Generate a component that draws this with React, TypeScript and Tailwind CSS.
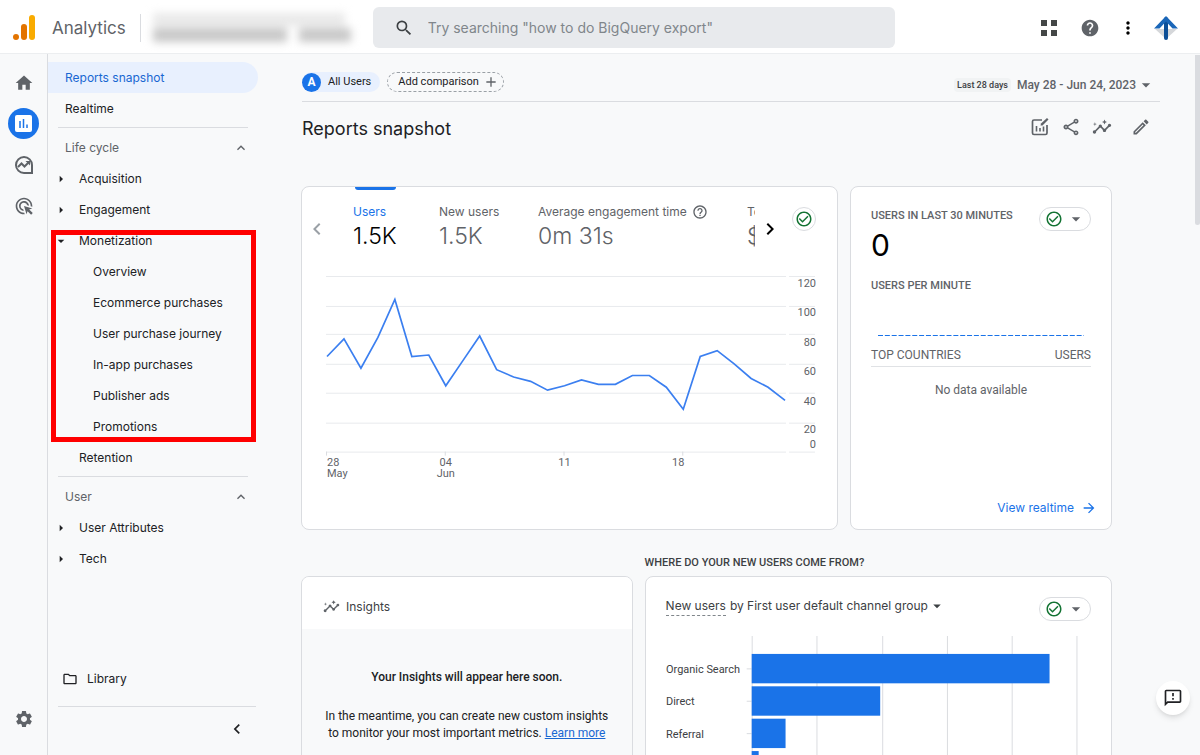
import type { ReactNode } from "react";
import {
  MdAdsClick,
  MdArrowDropDown,
  MdArrowForward,
  MdArrowRight,
  MdCheckCircleOutline,
  MdChevronLeft,
  MdChevronRight,
  MdHelp,
  MdHelpOutline,
  MdHome,
  MdInsights,
  MdMoreVert,
  MdOutlineEdit,
  MdOutlineFeedback,
  MdOutlineFolder,
  MdSearch,
  MdSettings,
  MdOutlineShare,
  MdKeyboardArrowUp,
  MdAdd,
} from "react-icons/md";

const monetization = [
  "Overview",
  "Ecommerce purchases",
  "User purchase journey",
  "In-app purchases",
  "Publisher ads",
  "Promotions",
];

const users = [
  65, 77, 57, 78, 104, 65, 66, 45, 62, 79, 56, 51, 48, 42, 45, 49, 46, 46, 52, 52, 44, 29, 65, 69, 60, 50, 44, 35,
];

const yLabels = [
  { text: "120", y: 17 },
  { text: "100", y: 46 },
  { text: "80", y: 76 },
  { text: "60", y: 105 },
  { text: "40", y: 135 },
  { text: "20", y: 163 },
  { text: "0", y: 178 },
];

const channels = [
  { name: "Organic Search", width: 299 },
  { name: "Direct", width: 129 },
  { name: "Referral", width: 34 },
  { name: "", width: 7 },
];

function AnalyticsLogo() {
  return (
    <svg width="24" height="28" viewBox="0 0 24 28" aria-hidden="true">
      <rect x="16" y="1" width="6" height="25" rx="3" fill="#f9ab00" />
      <rect x="8" y="10" width="6" height="16" rx="3" fill="#e37400" />
      <circle cx="3" cy="23" r="3" fill="#e37400" />
    </svg>
  );
}

function AccountLogo() {
  return (
    <svg width="26" height="26" viewBox="0 0 26 26" aria-hidden="true">
      <path d="M2 14h22L13 24z" fill="#d5d7da" />
      <path d="M13 4v19" stroke="#0d4f97" strokeWidth="4" strokeLinecap="round" />
      <path d="M13 1 1 13.500h5.500L13 6.500l6.500 7H25z" fill="#1a66b8" />
    </svg>
  );
}

function ReportsIcon() {
  return (
    <svg width="17" height="17" viewBox="0 0 17 17" aria-hidden="true">
      <rect width="17" height="17" rx="2" fill="#fff" />
      <path d="M5 6v7M8.500 4v9M12 9.500v3.500" stroke="#1a73e8" strokeWidth="1.500" />
    </svg>
  );
}

function ExploreIcon() {
  return (
    <svg width="20" height="20" viewBox="0 0 20 20" fill="none" stroke="#5f6368" aria-hidden="true">
      <path d="M10 18a8 8 0 1 1 8-8v8z" strokeWidth="2" />
      <path d="m4 12 3.500-3.500 3 3L15 7" strokeWidth="2" />
      <path d="M11.500 6H16v4.500z" fill="#5f6368" stroke="none" />
    </svg>
  );
}

function CustomizeIcon() {
  return (
    <svg width="20" height="20" viewBox="0 0 20 20" fill="none" stroke="#5f6368" strokeWidth="1.700" aria-hidden="true">
      <path d="M12 3H4Q2.500 3 2.500 4.500v11.500Q2.500 17.500 4 17.500h11.500q1.500 0 1.500-1.500V8" />
      <path d="M6.500 9v5.500M10 11v3.500M13.500 9.500v5" strokeWidth="1.600" />
      <path d="m10.500 8.500.5-2L17 1l1.500 1.500-6 6z" fill="#5f6368" stroke="none" />
    </svg>
  );
}

function NavItem({ children, arrow }: { children: ReactNode; arrow?: "right" | "down" }) {
  return (
    <a href="#" className="flex h-[31px] items-center pl-[5px]">
      <span className="flex w-[26px]">
        {arrow === "right" && <MdArrowRight size={16} />}
        {arrow === "down" && <MdArrowDropDown size={16} />}
      </span>
      {children}
    </a>
  );
}

function NavGroup({ children }: { children: ReactNode }) {
  return (
    <button className="mt-[5px] flex h-[30px] w-full items-center justify-between pr-[19px] pl-[17px] text-[#5f6368]">
      {children}
      <MdKeyboardArrowUp size={16} />
    </button>
  );
}

function QualityMenu() {
  return (
    <button
      aria-label="Data quality"
      className="flex h-6 w-[52px] shrink-0 items-center justify-between rounded-full border border-[#dadce0] bg-white pr-1 pl-[5px]"
    >
      <MdCheckCircleOutline size={18} className="text-[#137333]" />
      <MdArrowDropDown size={20} className="text-[#5f6368]" />
    </button>
  );
}

function Header() {
  return (
    <header className="flex h-[54px] shrink-0 items-center border-b border-[#eceef0] bg-white pt-[2px] pr-[21px] pl-[13px]">
      <AnalyticsLogo />
      <span className="ml-[15px] pt-[2px] font-['Inter',sans-serif] text-[17px] text-[#5f6368]">Analytics</span>
      <span className="mr-[12px] ml-[14px] h-7 w-px bg-[#dadce0]" />
      {/* Redacted account name */}
      <div className="flex h-[34px] w-[204px] flex-col justify-center gap-[2px] overflow-hidden blur-[4px]">
        <span className="h-[13px] w-[192px] bg-[#e9e9e9]" />
        <span className="flex h-[14px] gap-[12px]">
          <span className="w-[134px] bg-[#c8c8c8]" />
          <span className="w-[52px] bg-[#c8c8c8]" />
        </span>
      </div>
      <label className="ml-[16px] flex h-[41px] w-[522px] items-center rounded-md bg-[#e8eaed] pl-[21px]">
        <MdSearch size={20} className="text-[#3c4043]" />
        <input
          type="text"
          aria-label="Search"
          placeholder={'Try searching "how to do BigQuery export"'}
          className="ml-[14px] flex-1 bg-transparent font-['Inter',sans-serif] text-[14px] outline-none placeholder:text-[#80868b]"
        />
      </label>
      <div className="ml-auto flex items-center">
        <button aria-label="Apps" className="mr-[23px] grid grid-cols-2 gap-[4px]">
          <span className="size-[6px] bg-[#444746]" />
          <span className="size-[6px] bg-[#444746]" />
          <span className="size-[6px] bg-[#444746]" />
          <span className="size-[6px] bg-[#444746]" />
        </button>
        <button aria-label="Help" className="mr-[18px]">
          <MdHelp size={20} className="text-[#5f6368]" />
        </button>
        <button aria-label="More" className="mr-[15px]">
          <MdMoreVert size={20} />
        </button>
        <button aria-label="Account">
          <AccountLogo />
        </button>
      </div>
    </header>
  );
}

function Rail() {
  return (
    <aside className="flex w-12 shrink-0 flex-col items-center border-r border-[#dadce0] pt-[19px] pb-[26px] text-[#5f6368]">
      <button aria-label="Home">
        <MdHome size={20} />
      </button>
      <button aria-label="Reports" className="mt-[15px] flex size-[31px] items-center justify-center rounded-full bg-[#1a73e8]">
        <ReportsIcon />
      </button>
      <button aria-label="Explore" className="mt-[16px]">
        <ExploreIcon />
      </button>
      <button aria-label="Advertising" className="mt-[21px]">
        <MdAdsClick size={20} />
      </button>
      <button aria-label="Admin" className="mt-auto">
        <MdSettings size={20} />
      </button>
    </aside>
  );
}

function Sidebar() {
  return (
    <nav className="flex w-[220px] shrink-0 flex-col pt-2 font-['Inter',sans-serif] text-[12px] text-[#202124]">
      <a href="#" className="mr-[10px] flex h-[31px] items-center rounded-r-full bg-[#e8f0fe] pl-[17px] text-[#1967d2]">
        Reports snapshot
      </a>
      <a href="#" className="flex h-[31px] items-center pl-[17px]">
        Realtime
      </a>
      <hr className="mt-[3px] mr-5 ml-[10px] border-[#dadce0]" />
      <NavGroup>Life cycle</NavGroup>
      <NavItem arrow="right">Acquisition</NavItem>
      <NavItem arrow="right">Engagement</NavItem>
      <div className="relative">
        <NavItem arrow="down">Monetization</NavItem>
        {monetization.map((item) => (
          <a key={item} href="#" className="flex h-[31px] items-center pl-[45px]">
            {item}
          </a>
        ))}
        {/* Highlight frame */}
        <div className="pointer-events-none absolute top-[5px] right-[12px] bottom-0 left-[3px] border-[5px] border-[#ff0000]" />
      </div>
      <NavItem>Retention</NavItem>
      <hr className="mt-[3px] mr-5 ml-[10px] border-[#dadce0]" />
      <NavGroup>User</NavGroup>
      <NavItem arrow="right">User Attributes</NavItem>
      <NavItem arrow="right">Tech</NavItem>
      <a href="#" className="mt-auto flex h-[31px] items-center gap-[9px] pl-[14px]">
        <MdOutlineFolder size={16} />
        Library
      </a>
      <hr className="mt-[12px] mr-[12px] ml-[10px] border-[#dadce0]" />
      <button aria-label="Collapse" className="mt-[12px] mb-[16px] self-end pr-[21px]">
        <MdChevronLeft size={20} />
      </button>
    </nav>
  );
}

function UsersChart() {
  const points = users.map((value, i) => `${1 + i * 17},${182 - (value * 176) / 120}`).join(" ");
  return (
    <svg viewBox="0 0 493 210" className="mt-[20px] w-full font-['Roboto',sans-serif]" fontSize="11" fill="#5f6368">
      {[6, 36, 64, 94, 123, 153, 182].map((y) => (
        <path key={y} d={`M0 ${y + 0.5}h461M464 ${y + 0.5}h26`} stroke="#e8eaed" />
      ))}
      {[1, 120, 239, 358].map((x) => (
        <path key={x} d={`M${x - 0.5} 182v4`} stroke="#dadce0" />
      ))}
      {yLabels.map((label) => (
        <text key={label.text} x="491" y={label.y} textAnchor="end">
          {label.text}
        </text>
      ))}
      <text x="1" y="196">28</text>
      <text x="1" y="207">May</text>
      <text x="120" y="196" textAnchor="middle">04</text>
      <text x="120" y="207" textAnchor="middle">Jun</text>
      <text x="239" y="196" textAnchor="middle">11</text>
      <text x="353" y="196" textAnchor="middle">18</text>
      <polyline points={points} fill="none" stroke="#3b7ff0" strokeWidth="1.700" />
    </svg>
  );
}

function Metric({ label, value, className }: { label: ReactNode; value: string; className: string }) {
  return (
    <button className={`flex shrink-0 flex-col items-start ${className}`}>
      <span className="flex h-4 items-center gap-[5px] text-[12px] whitespace-nowrap">{label}</span>
      <span className="mt-[2px] text-[23px] leading-[28px] font-light">{value}</span>
    </button>
  );
}

function UsersCard() {
  return (
    <section className="h-[344px] flex-1 rounded-lg border border-[#dadce0] bg-white pl-[24px] font-['Inter',sans-serif]">
      <div className="ml-[29px] h-[3px] w-[41px] rounded-b-sm bg-[#1a73e8]" />
      <div className="-ml-[21px] flex pt-[14px]">
        <button aria-label="Previous" className="mt-[13px] mr-[24px] h-6 text-[#9aa0a6]">
          <MdChevronLeft size={24} />
        </button>
        <div className="flex w-[402px] overflow-hidden text-[#5f6368]">
          <Metric label={<span className="text-[#1a73e8]">Users</span>} value="1.5K" className="w-[86px] [&>span:last-child]:text-black" />
          <Metric label="New users" value="1.5K" className="w-[99px]" />
          <Metric
            label={
              <>
                Average engagement time <MdHelpOutline size={16} />
              </>
            }
            value="0m 31s"
            className="w-[209px]"
          />
          <Metric label="Total revenue" value="$0.00" className="" />
        </div>
        <button aria-label="Next" className="mt-[13px] ml-[3px] h-6">
          <MdChevronRight size={24} />
        </button>
        <button
          aria-label="Data quality"
          className="mt-[3px] ml-[10px] flex size-6 items-center justify-center rounded-full border border-[#dadce0] text-[#137333]"
        >
          <MdCheckCircleOutline size={18} />
        </button>
      </div>
      <div className="pr-[19px]">
        <UsersChart />
      </div>
    </section>
  );
}

function RealtimeCard() {
  return (
    <section className="flex h-[344px] w-[262px] shrink-0 flex-col rounded-lg border border-[#dadce0] bg-white px-[20px] text-[12px] text-[#5f6368]">
      <div className="mt-[20px] flex h-6 justify-between">
        <h2 className="text-[11px] leading-[18px] font-medium">USERS IN LAST 30 MINUTES</h2>
        <QualityMenu />
      </div>
      <p className="font-['Inter',sans-serif] text-[30px] leading-[28px] text-black">0</p>
      <h2 className="mt-[18px] text-[11px] leading-[18px] font-medium">USERS PER MINUTE</h2>
      <svg viewBox="0 0 206 2" className="mt-[39px] ml-[7px] h-[2px] w-[206px] shrink-0" aria-hidden="true">
        <path d="M0 1.500h206" stroke="#1a73e8" strokeWidth="1" strokeDasharray="5 1.850" />
      </svg>
      <table className="mt-[8px] w-full">
        <thead>
          <tr className="border-b border-[#e0e2e5] text-[12px] leading-[22px]">
            <th className="text-left align-top font-normal">TOP COUNTRIES</th>
            <th className="text-right align-top font-normal">USERS</th>
          </tr>
        </thead>
        <tbody>
          <tr>
            <td colSpan={2} className="pt-[14px] text-center">
              No data available
            </td>
          </tr>
        </tbody>
      </table>
      <a
        href="#"
        className="mt-auto -mr-[6px] mb-[11px] flex h-5 items-center justify-end gap-[7px] font-['Inter',sans-serif] text-[#1a73e8]"
      >
        View realtime
        <MdArrowForward size={16} />
      </a>
    </section>
  );
}

function InsightsCard() {
  return (
    <section className="mt-[20px] flex h-[344px] flex-[330] flex-col overflow-hidden rounded-lg border border-[#dadce0] text-[#202124]">
      <h2 className="flex h-[52px] items-center gap-[6px] bg-white pt-[7px] pl-[21px] font-['Inter',sans-serif] text-[12px] text-[#3c4043]">
        <MdInsights size={17} className="text-[#5f6368]" />
        Insights
      </h2>
      <div className="px-[20px] pt-[40px] text-center text-[12px] leading-[17px]">
        <p className="font-medium">Your Insights will appear here soon.</p>
        <p className="mt-[22px]">
          In the meantime, you can create new custom insights to monitor your most important metrics.{" "}
          <a href="#" className="text-[#1967d2] underline">
            Learn more
          </a>
        </p>
      </div>
    </section>
  );
}

function ChannelChart() {
  return (
    <svg viewBox="0 0 427 176" className="mt-[14px] w-full font-['Roboto',sans-serif]" fontSize="12" fill="#3c4043">
      {[86, 151, 217, 282, 347, 412].map((x) => (
        <path key={x} d={`M${x + 0.5} 0v176`} stroke="#dadce0" />
      ))}
      {channels.map((channel, i) => (
        <g key={i}>
          <path d={`M81 ${33 + i * 32.5}h5`} stroke="#dadce0" />
          <rect x="86" y={18 + i * 32.5} width={channel.width} height="29.500" fill="#1a73e8" />
          <text x="0" y={37 + i * 32.5} fontSize="11">
            {channel.name}
          </text>
        </g>
      ))}
    </svg>
  );
}

function ChannelsColumn() {
  return (
    <div className="flex-[468]">
      <h2 className="h-[20px] text-[11px] leading-[14px] font-medium text-[#3c4043]">WHERE DO YOUR NEW USERS COME FROM?</h2>
      <section className="h-[344px] rounded-lg border border-[#dadce0] bg-white px-[20px]">
        <div className="mt-[20px] flex h-[25px] items-start justify-between">
          <button className="flex items-start font-['Inter',sans-serif] text-[12px] leading-[18px] text-[#3c4043]">
            <span className="mr-[4px] border-b border-dashed border-[#80868b]">New users</span>
            by First user default channel group
            <MdArrowDropDown size={18} />
          </button>
          <QualityMenu />
        </div>
        <ChannelChart />
      </section>
    </div>
  );
}

function ReportHeader() {
  return (
    <>
      <div className="flex items-end justify-between border-b border-[#dadce0] pt-[18px] pb-[9px] text-[11px]">
        <div className="flex gap-[7px] text-[#202124]">
          <button className="flex h-5 items-center rounded-full bg-[#e8f0fe] pr-[9px]">
            <span className="mr-[7px] flex size-[19px] items-center justify-center rounded-full bg-[#1a73e8] text-[12px] font-bold text-white">
              A
            </span>
            All Users
          </button>
          <button className="flex h-5 items-center gap-[4px] rounded-full border border-dashed border-[#9aa0a6] pr-[4px] pl-[10px]">
            Add comparison
            <MdAdd size={16} className="text-[#5f6368]" />
          </button>
        </div>
        <button className="flex h-[14px] items-center pr-1 text-[#5f6368]">
          <span className="mr-[6px] rounded-sm bg-[#f1f3f4] px-[3px] text-[9px] leading-[14px] font-medium text-[#3c4043]">
            Last 28 days
          </span>
          <span className="text-[12px] font-medium">May 28 - Jun 24, 2023</span>
          <MdArrowDropDown size={20} />
        </button>
      </div>
      <div className="flex h-[84px] justify-between pt-[13px] pr-[9px]">
        <h1 className="font-['Inter',sans-serif] text-[18px] leading-[28px] text-[#202124]">Reports snapshot</h1>
        <div className="flex h-6 items-center text-[#5f6368]">
          <button aria-label="Customize" className="mr-[11px]">
            <CustomizeIcon />
          </button>
          <button aria-label="Share" className="mr-[11px]">
            <MdOutlineShare size={20} />
          </button>
          <button aria-label="Insights" className="mr-[19px]">
            <MdInsights size={20} />
          </button>
          <button aria-label="Edit">
            <MdOutlineEdit size={20} />
          </button>
        </div>
      </div>
    </>
  );
}

export default function App() {
  return (
    <div className="flex h-screen flex-col overflow-hidden bg-[#f8f9fa] font-['Roboto',sans-serif]">
      <Header />
      <div className="flex min-h-0 flex-1">
        <Rail />
        <Sidebar />
        <main className="min-w-0 flex-1 overflow-hidden pr-[35px] pl-[34px]">
          <ReportHeader />
          <div className="-ml-px pr-12">
            <div className="flex gap-3">
              <UsersCard />
              <RealtimeCard />
            </div>
            <div className="mt-[26px] flex gap-3 pb-8">
              <InsightsCard />
              <ChannelsColumn />
            </div>
          </div>
        </main>
        {/* Scrollbar thumb */}
        <div className="mt-px h-[170px] w-[5px] rounded-b-sm bg-[#dadce0]" />
      </div>
      <button
        aria-label="Send feedback"
        className="absolute right-[10px] bottom-[40px] flex size-[34px] items-center justify-center rounded-full bg-white text-[#202124] shadow-md"
      >
        <MdOutlineFeedback size={20} />
      </button>
    </div>
  );
}
